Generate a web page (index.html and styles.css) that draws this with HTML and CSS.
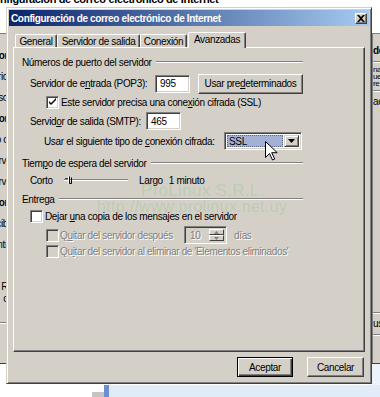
FILE: index.html
```html
<!DOCTYPE html>
<html lang="es">
<head>
  <meta charset="UTF-8">
  <title>Configuración de correo electrónico de Internet</title>
  <link rel="stylesheet" href="styles.css">
</head>
<body>
  <div class="desk">
    <div class="back-title"><span>nfiguración de correo electrónico de Internet</span></div>
    <div class="back-pane">
      <div class="back-left">
        <div class="frag b">Servidor</div>
        <div class="frag">Nombre de usuario</div>
        <div class="frag">Acceso</div>
        <div class="frag b">Servidor</div>
        <div class="frag">Puerto c</div>
        <div class="frag">Servi</div>
        <div class="frag">Servi</div>
        <div class="frag b">Servidor</div>
        <div class="frag">Recib</div>
        <div class="frag">Entr</div>
        <div class="frag small first">R</div>
        <div class="frag small">c</div>
        <div class="back-rule"></div>
      </div>
      <div class="back-right">
        <div class="rfrag b">de</div>
        <div class="rrule"></div>
        <div class="rfrag tiny">na</div>
        <div class="rfrag tiny">ue</div>
        <div class="rfrag tiny">re</div>
        <div class="rrule"></div>
        <div class="rfrag">ac</div>
        <div class="rspacer"></div>
        <div class="rrule"></div>
        <div class="rfrag">us</div>
        <div class="rrule"></div>
      </div>
    </div>
    <div class="back-bottom">
      <span class="bb-gray"></span><span class="bb-bar"></span><span class="bb-blue"></span>
    </div>
  </div>

  <div class="dialog">
    <div class="titlebar">
      <span class="title">Configuración de correo electrónico de Internet</span>
      <span class="close">
        <svg width="8" height="7" viewBox="0 0 8 7"><path d="M0 0h2l2 2 2-2h2L5 3.5 8 7H6L4 5 2 7H0l3-3.5z" fill="#000"/></svg>
      </span>
    </div>
    <div class="body">
      <div class="tabs">
        <div class="tab w-gen">General</div>
        <div class="tab w-sal">Servidor de salida</div>
        <div class="tab w-con">Conexión</div>
        <div class="tab active">Avanzadas</div>
      </div>
      <div class="panel">
        <div class="grp-head"><span>Números de puerto del servidor</span><span class="grp-line"></span></div>

        <div class="row r-pop">
          <span class="lbl w-pop">Servidor de e<u>n</u>trada (POP3):</span>
          <span class="field w-port">995</span>
          <span class="btn w-pred">Usar pre<u>d</u>eterminados</span>
        </div>

        <div class="row r-ssl">
          <span class="chk">
            <svg width="9" height="9" viewBox="0 0 9 9"><path d="M1 3v2l2 2 5-5V0L3 5z" fill="#000"/></svg>
          </span>
          <span>Este servidor precisa una cone<u>x</u>ión cifrada (SSL)</span>
        </div>

        <div class="row r-smtp">
          <span class="lbl w-smtp">Servid<u>o</u>r de salida (SMTP):</span>
          <span class="field w-port">465</span>
        </div>

        <div class="row r-usar">
          <span class="lbl w-usar">Usar el siguiente tipo de <u>c</u>onexión cifrada:</span>
          <span class="combo">
            <span class="combo-val">SSL</span>
            <span class="combo-btn">
              <svg width="7" height="4" viewBox="0 0 7 4"><path d="M0 0h7L3.5 4z" fill="#000"/></svg>
            </span>
          </span>
        </div>

        <div class="grp-head g-time"><span>Tiem<u>p</u>o de espera del servidor</span><span class="grp-line"></span></div>

        <div class="row r-time">
          <span class="lbl w-corto">Corto</span>
          <svg class="slider" width="64" height="12" viewBox="0 0 64 12">
            <path d="M0 5.5h64" stroke="#808080"/>
            <path d="M0 6.5h64" stroke="#fff"/>
            <path d="M1 4.5h3" stroke="#404040"/>
            <path d="M5.5 2.5v7h2v-6" fill="none" stroke="#000"/>
            <path d="M4.5 2.5v7" stroke="#fff"/>
          </svg>
          <span class="largo">Largo</span>
          <span class="minuto">1 minuto</span>
        </div>

        <div class="grp-head g-ent"><span>Entrega</span><span class="grp-line"></span></div>

        <div class="row r-copy">
          <span class="chk"></span>
          <span>Dejar <u>u</u>na copia de los mensajes en el servidor</span>
        </div>

        <div class="row r-after">
          <span class="chk off"></span>
          <span class="dis w-after">Q<u>u</u>itar del servidor después</span>
          <span class="spin">
            <span class="spin-val">10</span>
            <span class="spin-btns">
              <span class="spin-b"><svg width="5" height="3" viewBox="0 0 5 3"><path d="M2.5 0L5 3H0z" fill="#808080"/></svg></span>
              <span class="spin-b"><svg width="5" height="3" viewBox="0 0 5 3"><path d="M0 0h5L2.5 3z" fill="#808080"/></svg></span>
            </span>
          </span>
          <span class="dis dias">días</span>
        </div>

        <div class="row r-del">
          <span class="chk off"></span>
          <span class="dis">Qu<u>i</u>tar del servidor al eliminar de 'Elementos eliminados'</span>
        </div>

        <div class="wm wm-name">ProLinux S.R.L.</div>
        <div class="wm wm-url">http://www.prolinux.net.uy</div>
      </div>
      <div class="actions">
        <span class="btn btn-default w-ok">Aceptar</span>
        <span class="btn w-cancel">Cancelar</span>
      </div>
    </div>
  </div>

  <svg class="cursor" width="13" height="20" viewBox="0 0 13 20">
    <path d="M0.5 0.5v16l4-4 3 6.5 2.2-1-3-6.3h5.5z" fill="#fff" stroke="#000" stroke-linejoin="miter"/>
  </svg>
</body>
</html>
```

FILE: styles.css
```css
* {
  box-sizing: border-box;
}
body {
  margin: 0;
  width: 380px;
  height: 397px;
  overflow: hidden;
  position: relative;
  background: #fff;
  font-family: "Liberation Sans", Arial, sans-serif;
  font-size: 10px;
  letter-spacing: -0.35px;
  color: #000;
}
u {
  text-decoration-thickness: 1px;
  text-underline-offset: 1px;
}

/* window behind the dialog */
.desk {
  display: flex;
  flex-direction: column;
  height: 397px;
}
.back-title {
  height: 34px;
  border-bottom: 1px solid #808080;
  overflow: hidden;
}
.back-title span {
  display: block;
  margin-top: -7px;
  font-size: 11px;
  font-weight: bold;
}
.back-pane {
  height: 330px;
  background: #d4d0c8;
  display: flex;
  justify-content: space-between;
  border-bottom: 1px solid #404040;
}
.back-left {
  width: 8px;
  overflow: hidden;
  display: flex;
  flex-direction: column;
  align-items: flex-end;
  padding-top: 11px;
}
.frag {
  height: 21px;
  line-height: 21px;
  white-space: nowrap;
}
.frag.small {
  height: 12px;
  line-height: 12px;
}
.frag.first {
  margin-top: 26px;
}
.b {
  font-weight: bold;
}
.back-rule {
  width: 8px;
  margin-top: 17px;
  border-top: 1px solid #808080;
  border-bottom: 1px solid #fff;
}
.back-right {
  width: 8px;
  overflow: hidden;
  display: flex;
  flex-direction: column;
  padding-top: 10px;
  border-left: 1px solid #808080;
}
.rfrag {
  height: 14px;
  line-height: 14px;
  white-space: nowrap;
}
.rfrag.tiny {
  height: 7px;
  line-height: 7px;
  font-size: 8px;
}
.rrule {
  width: 8px;
  margin: 3px 0;
  border-top: 1px solid #808080;
  border-bottom: 1px solid #fff;
}
.rspacer {
  height: 200px;
}
.back-bottom {
  flex: 1;
  display: flex;
  align-items: flex-end;
  background: linear-gradient(to right, #fff 372px, #eef3fb 372px);
}
.bb-gray {
  width: 12px;
  height: 5px;
  margin-left: 92px;
  background: #c4c4c4;
}
.bb-bar {
  width: 5px;
  height: 12px;
  background: #6b8ed6;
}
.bb-blue {
  flex: 1;
  height: 12px;
  background: #e2ecf9;
}

/* dialog */
.dialog {
  position: absolute;
  left: 6px;
  top: 7px;
  width: 366px;
  height: 377px;
  background: #d4d0c8;
  border: 1px solid;
  border-color: #d4d0c8 #404040 #404040 #d4d0c8;
  box-shadow: inset 1px 1px #fff, inset -1px -1px #808080;
  padding: 2px;
  display: flex;
  flex-direction: column;
}
.titlebar {
  height: 16px;
  display: flex;
  align-items: center;
  justify-content: space-between;
  padding: 0 2px;
  background: linear-gradient(to right, #0a246a, #a6caf0);
}
.title {
  color: #fff;
  font-weight: bold;
  font-size: 10px;
}
.close {
  width: 12px;
  height: 11px;
  display: flex;
  align-items: center;
  justify-content: center;
  background: #d4d0c8;
  border: 1px solid;
  border-color: #fff #404040 #404040 #fff;
  box-shadow: inset -1px -1px #808080;
}
.body {
  flex: 1;
  padding: 6px 4px 0;
  display: flex;
  flex-direction: column;
}
.tabs {
  height: 15px;
  display: flex;
  align-items: flex-end;
  padding-left: 2px;
}
.tab {
  height: 13px;
  display: flex;
  align-items: center;
  justify-content: center;
  border: 1px solid;
  border-bottom: none;
  border-color: #fff #404040 transparent #fff;
  border-radius: 2px 2px 0 0;
  box-shadow: inset -1px 0 #808080;
}
.w-gen { width: 42px; }
.w-sal { width: 83px; }
.w-con { width: 47px; }
.tab.active {
  width: 58px;
  height: 16px;
  margin-left: 1px;
  margin-bottom: -1px;
  padding-bottom: 2px;
  background: #d4d0c8;
  position: relative;
  z-index: 1;
}
.panel {
  height: 305px;
  position: relative;
  border: 1px solid;
  border-color: #fff #404040 #404040 #fff;
  box-shadow: inset -1px -1px #808080;
  padding: 8px 0 0 8px;
  display: flex;
  flex-direction: column;
}
.grp-head {
  width: 281px;
  height: 12px;
  display: flex;
  align-items: center;
}
.grp-line {
  flex: 1;
  margin-left: 4px;
  border-top: 1px solid #808080;
  border-bottom: 1px solid #fff;
}
.row {
  display: flex;
  align-items: center;
}
.lbl {
  flex: none;
  white-space: nowrap;
}
.r-pop { height: 19px; margin: 6px 0 0 8px; }
.w-pop { width: 125px; }
.w-port { width: 35px; }
.w-pred { width: 105px; height: 19px; margin-left: 8px; }
.r-ssl { height: 13px; margin: 3px 0 0 24px; gap: 2px; }
.r-smtp { height: 18px; margin: 3px 0 0 8px; }
.w-smtp { width: 116px; }
.r-usar { height: 18px; margin: 2px 0 0 22px; }
.w-usar { width: 180px; }
.g-time { margin-top: 7px; }
.r-time { height: 12px; margin: 5px 0 0 8px; }
.w-corto { width: 34px; }
.largo { margin-left: 11px; }
.minuto { margin-left: 6px; }
.g-ent { margin-top: 7px; }
.r-copy { height: 13px; margin: 5px 0 0 8px; gap: 2px; }
.r-after { height: 18px; margin: 3px 0 0 24px; }
.w-after { width: 124px; margin-left: 1px; }
.dias { margin-left: 7px; }
.r-del { height: 13px; margin: 1px 0 0 24px; gap: 1px; }

.field {
  height: 18px;
  display: flex;
  align-items: center;
  padding-left: 4px;
  background: #fff;
  border: 1px solid;
  border-color: #808080 #fff #fff #808080;
  box-shadow: inset 1px 1px #404040, inset -1px -1px #d4d0c8;
}
.btn {
  display: flex;
  align-items: center;
  justify-content: center;
  height: 20px;
  background: #d4d0c8;
  border: 1px solid;
  border-color: #fff #404040 #404040 #fff;
  box-shadow: inset -1px -1px #808080;
}
.btn-default {
  border-color: #000;
  box-shadow: inset 1px 1px #fff, inset -1px -1px #404040, inset -2px -2px #808080;
}
.chk {
  flex: none;
  width: 13px;
  height: 13px;
  display: flex;
  align-items: center;
  justify-content: center;
  background: #fff;
  border: 1px solid;
  border-color: #808080 #fff #fff #808080;
  box-shadow: inset 1px 1px #404040, inset -1px -1px #d4d0c8;
}
.chk.off {
  background: #d4d0c8;
}
.dis {
  color: #808080;
  text-shadow: 1px 1px 0 #fff;
  white-space: nowrap;
}
.combo {
  width: 78px;
  height: 18px;
  display: flex;
  padding: 2px;
  background: #fff;
  border: 1px solid;
  border-color: #808080 #fff #fff #808080;
  box-shadow: inset 1px 1px #404040, inset -1px -1px #d4d0c8;
}
.combo-val {
  flex: 1;
  display: flex;
  align-items: center;
  padding-left: 2px;
  margin-right: 1px;
  background: #a3b2d4;
  outline: 1px dotted #5a6a90;
  outline-offset: -1px;
}
.combo-btn {
  width: 15px;
  display: flex;
  align-items: center;
  justify-content: center;
  background: #d4d0c8;
  border: 1px solid;
  border-color: #d4d0c8 #404040 #404040 #d4d0c8;
  box-shadow: inset 1px 1px #fff, inset -1px -1px #808080;
}
.slider {
  display: block;
}
.spin {
  width: 43px;
  height: 18px;
  display: flex;
  padding: 2px;
  background: #d4d0c8;
  border: 1px solid;
  border-color: #808080 #fff #fff #808080;
  box-shadow: inset 1px 1px #404040, inset -1px -1px #d4d0c8;
}
.spin-val {
  flex: 1;
  display: flex;
  align-items: center;
  padding-left: 3px;
  color: #808080;
  text-shadow: 1px 1px 0 #fff;
}
.spin-btns {
  width: 15px;
  display: flex;
  flex-direction: column;
}
.spin-b {
  flex: 1;
  display: flex;
  align-items: center;
  justify-content: center;
  border: 1px solid;
  border-color: #fff #404040 #404040 #fff;
}
.wm {
  position: absolute;
  white-space: nowrap;
  color: rgba(130, 195, 120, 0.3);
  letter-spacing: 0.3px;
}
.wm-name {
  left: 127px;
  top: 133px;
  font-size: 17px;
}
.wm-url {
  left: 83px;
  top: 150px;
  font-size: 16px;
}
.actions {
  display: flex;
  justify-content: flex-end;
  gap: 14px;
  margin-top: 5px;
  padding-right: 1px;
}
.w-ok { width: 56px; }
.w-cancel { width: 57px; }
.cursor {
  position: absolute;
  left: 265px;
  top: 141px;
}
```
